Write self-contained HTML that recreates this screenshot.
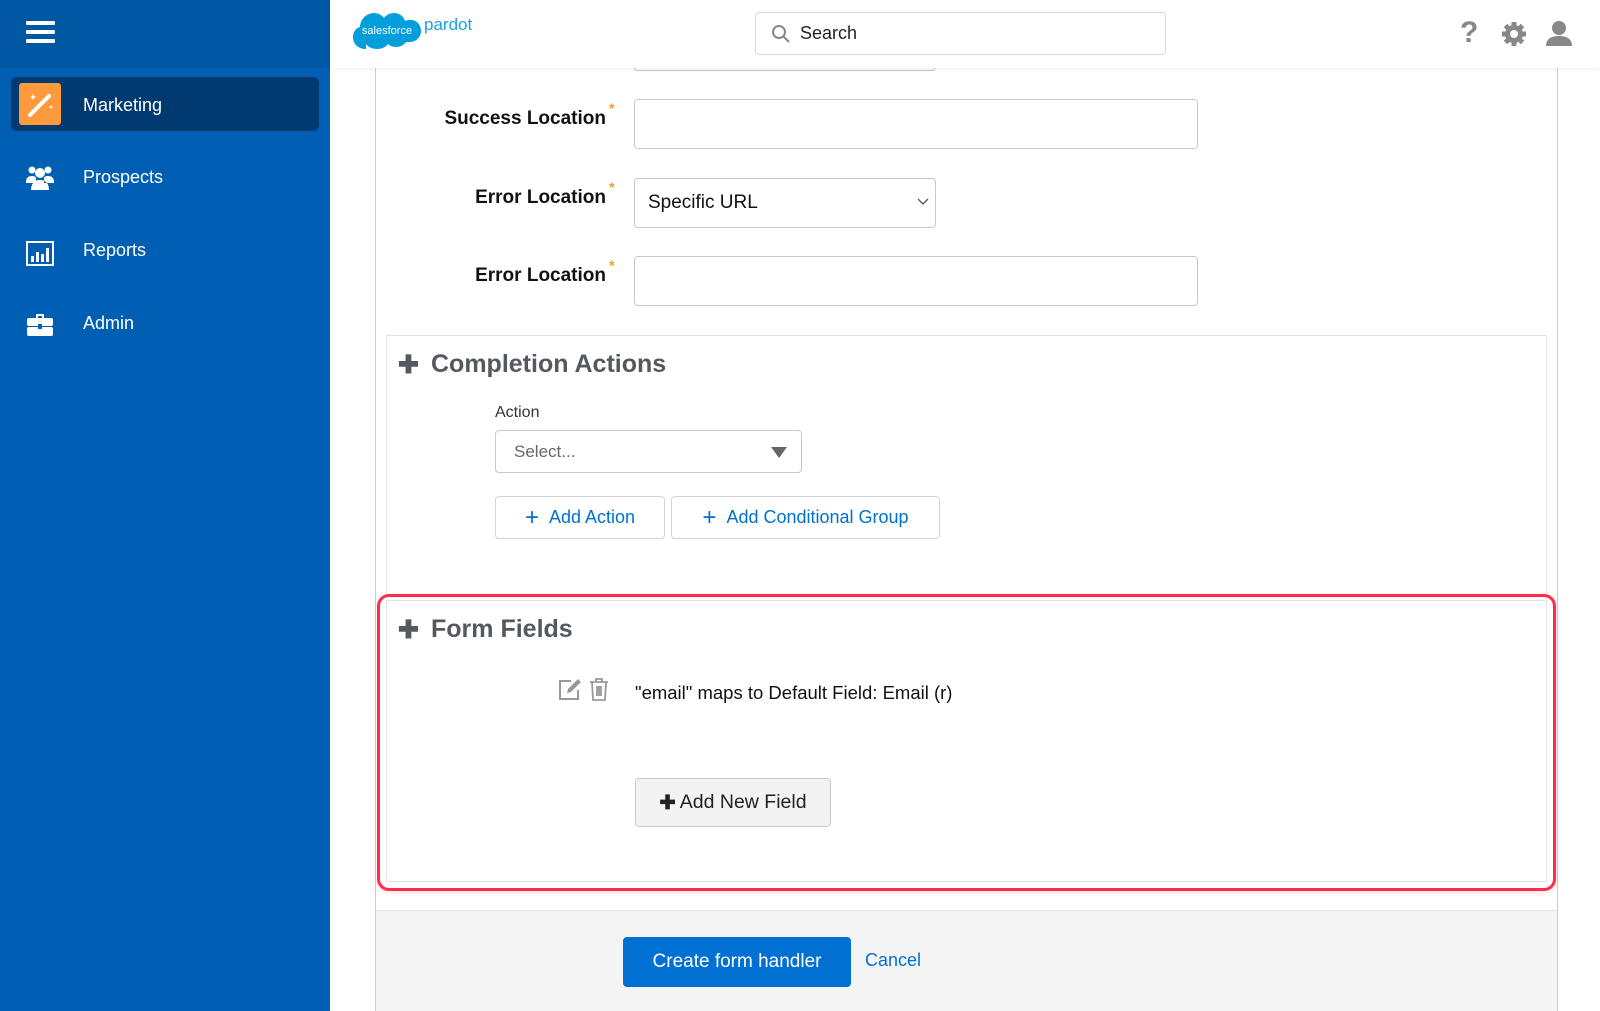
<!DOCTYPE html>
<html><head><meta charset="utf-8"><style>
*{box-sizing:border-box;margin:0;padding:0}
body{width:1600px;height:1011px;overflow:hidden;background:#fff;font-family:"Liberation Sans",sans-serif;position:relative;color:#16325c}
.abs{position:absolute}
.side{left:0;top:0;width:330px;height:1011px;background:#005fb2}
.sidetop{left:0;top:0;width:330px;height:68px;background:#0057a3}
.nav{left:83px;color:#fff;font-size:18px}
.hdr{left:330px;top:0;width:1270px;height:68px;background:#fff;box-shadow:0 2px 4px rgba(0,0,0,.06);z-index:5}
.lbl{font-weight:bold;font-size:19px;color:#111;text-align:right;width:300px;left:306px}
.lbl span{color:#ff9a1e;font-size:14px;top:-8px;margin-left:3px;position:absolute}
.inp{border:1px solid #c9c9c9;border-radius:4px;background:#fff}
.h2{font-size:25px;font-weight:bold;color:#54595f}
.btn{border:1px solid #d4d4d4;border-radius:4px;background:#fff;color:#0070d2;font-size:18px;display:flex;align-items:center;justify-content:center}
</style></head><body>
<div class="abs side"></div><div class="abs sidetop"></div>
<div class="abs" style="left:26px;top:21px;width:29px;height:4px;background:#fff;border-radius:1px;box-shadow:0 9px 0 #fff,0 18px 0 #fff"></div>
<div class="abs" style="left:11px;top:77px;width:308px;height:54px;background:#003a70;border-radius:6px"></div>
<div class="abs" style="left:19px;top:83px;width:42px;height:42px;background:#ff9a3c;border-radius:3px"></div>
<svg class="abs" style="left:19px;top:83px" width="42" height="42"><path d="M11 32 L30 13" stroke="#fff" stroke-width="4" stroke-linecap="round"/><path d="M14 11l1 2 2 1-2 1-1 2-1-2-2-1 2-1z M32 22l.7 1.3 1.3.7-1.3.7-.7 1.3-.7-1.3-1.3-.7 1.3-.7z" fill="#fff"/></svg>
<div class="abs nav" style="top:95px">Marketing</div>
<svg class="abs" style="left:26px;top:165px" width="28" height="28" fill="#fff"><circle cx="6" cy="5" r="3.5"/><circle cx="22" cy="5" r="3.5"/><circle cx="14" cy="8" r="5"/><path d="M0 17c0-4 2-6 6-6s4 2 4 2v5H0z M28 17c0-4-2-6-6-6s-4 2-4 2v5h10z M5 25c0-6 3-10 9-10s9 4 9 10z"/></svg>
<div class="abs nav" style="top:167px">Prospects</div>
<svg class="abs" style="left:26px;top:241px" width="28" height="25"><rect x="1" y="1" width="26" height="23" fill="none" stroke="#fff" stroke-width="2"/><rect x="5" y="15" width="3" height="6" fill="#fff"/><rect x="10" y="11" width="3" height="10" fill="#fff"/><rect x="15" y="13" width="3" height="8" fill="#fff"/><rect x="20" y="7" width="3" height="14" fill="#fff"/></svg>
<div class="abs nav" style="top:240px">Reports</div>
<svg class="abs" style="left:27px;top:314px" width="26" height="22" fill="#fff"><path d="M9 0h8v4h-2V2h-4v2H9z"/><rect x="0" y="4" width="26" height="8" rx="2"/><rect x="0" y="13" width="26" height="9" rx="2"/><rect x="11" y="10" width="4" height="5" fill="#005fb2"/></svg>
<div class="abs nav" style="top:313px">Admin</div>

<div class="abs hdr">
<svg class="abs" style="left:22px;top:5px" width="70" height="50"><path d="M14 44c-8 0-13-5-13-12 0-5 3-9 7-10 0-7 6-14 14-14 4 0 8 2 10 5 2-3 6-5 10-5 6 0 10 4 11 8 2-1 4-1 6-1 6 0 10 5 10 11s-5 11-11 11h-4c-2 3-6 5-10 5-3 0-6-1-8-3-2 3-6 5-11 5-5 0-9-2-11-5z" fill="#009edb"/><text x="35" y="29" font-size="11" fill="#fff" text-anchor="middle" font-family="Liberation Sans">salesforce</text></svg>
<div class="abs" style="left:94px;top:15px;font-size:17px;color:#1ba1e2">pardot</div>
<div class="abs inp" style="left:425px;top:12px;width:411px;height:43px;border-color:#d8d8d8"></div>
<svg class="abs" style="left:441px;top:24px" width="20" height="20"><circle cx="8" cy="8" r="6" fill="none" stroke="#888" stroke-width="2"/><path d="M12.5 12.5L18 18" stroke="#888" stroke-width="2"/></svg>
<div class="abs" style="left:470px;top:23px;font-size:18px;color:#222">Search</div>
<div class="abs" style="left:1130px;top:16px;font-size:30px;font-weight:bold;color:#888">?</div>
<svg class="abs" style="left:1171px;top:21px" width="26" height="26"><g fill="#888"><circle cx="13" cy="13" r="9"/><g stroke="#888" stroke-width="5"><path d="M13 1v24M1 13h24M4.5 4.5l17 17M21.5 4.5l-17 17"/></g></g><circle cx="13" cy="13" r="4" fill="#fff"/></svg>
<svg class="abs" style="left:1215px;top:20px" width="28" height="27" fill="#888"><circle cx="14" cy="8" r="7"/><path d="M1 26c0-7 5-10 13-10s13 3 13 10z"/></svg>
</div>
<div class="abs inp" style="left:634px;top:40px;width:302px;height:31px"></div>

<div class="abs" style="left:375px;top:68px;width:1183px;height:943px;border-left:1px solid #ccc;border-right:1px solid #ccc"></div>
<div class="abs lbl" style="top:108px">Success Location<span>*</span></div>
<div class="abs inp" style="left:634px;top:99px;width:564px;height:50px"></div>
<div class="abs lbl" style="top:187px">Error Location<span>*</span></div>
<div class="abs inp" style="left:634px;top:178px;width:302px;height:50px"></div>
<div class="abs" style="left:648px;top:192px;font-size:19px;color:#111">Specific URL</div>
<svg class="abs" style="left:917px;top:198px" width="12" height="8"><path d="M1 1l5 5 5-5" fill="none" stroke="#555" stroke-width="1.3"/></svg>
<div class="abs lbl" style="top:265px">Error Location<span>*</span></div>
<div class="abs inp" style="left:634px;top:256px;width:564px;height:50px"></div>

<div class="abs" style="left:386px;top:335px;width:1161px;height:270px;border:1px solid #e2e2e2;border-bottom:none"></div>
<div class="abs h2" style="left:398px;top:350px">✚</div>
<div class="abs h2" style="left:431px;top:350px">Completion Actions</div>
<div class="abs" style="left:495px;top:404px;font-size:16px;color:#333">Action</div>
<div class="abs inp" style="left:495px;top:430px;width:307px;height:43px"></div>
<div class="abs" style="left:514px;top:442px;font-size:17px;color:#666">Select...</div>
<svg class="abs" style="left:771px;top:447px" width="16" height="11"><path d="M0 0h16L8 11z" fill="#666"/></svg>
<div class="abs btn" style="left:495px;top:496px;width:170px;height:43px"><span style="font-size:24px;margin-right:10px;font-weight:300">+</span>Add Action</div>
<div class="abs btn" style="left:671px;top:496px;width:269px;height:43px"><span style="font-size:24px;margin-right:10px;font-weight:300">+</span>Add Conditional Group</div>

<div class="abs" style="left:386px;top:600px;width:1161px;height:282px;border:1px solid #e2e2e2;background:#fff"></div>
<div class="abs" style="left:377px;top:594px;width:1179px;height:297px;border:3px solid #ff2d4b;border-radius:12px;box-shadow:0 2px 6px rgba(255,45,75,.15)"></div>
<div class="abs h2" style="left:398px;top:615px">✚</div>
<div class="abs h2" style="left:431px;top:615px">Form Fields</div>
<svg class="abs" style="left:557px;top:678px" width="26" height="23"><path d="M14 3H3v18h18v-9" fill="none" stroke="#999" stroke-width="2"/><path d="M10 15l1-4 10-10 3 3-10 10z" fill="#999"/></svg>
<svg class="abs" style="left:589px;top:678px" width="20" height="23" fill="none" stroke="#999" stroke-width="1.8"><path d="M1 4h18M7 4V1h6v3M3 4l1 18h12l1-18M8 8v10M10 8v10M12 8v10"/></svg>
<div class="abs" style="left:635px;top:682px;font-size:18.5px;color:#111">"email" maps to Default Field: Email (r)</div>
<div class="abs" style="left:635px;top:778px;width:196px;height:49px;background:#f3f3f3;border:1px solid #c9c9c9;border-radius:4px;font-size:19.5px;color:#222;display:flex;align-items:center;justify-content:center"><b style="margin-right:4px">✚</b>Add New Field</div>

<div class="abs" style="left:376px;top:910px;width:1181px;height:101px;background:#f4f4f4;border-top:1px solid #e0e0e0"></div>
<div class="abs" style="left:623px;top:937px;width:228px;height:50px;background:#0070d2;border-radius:4px;color:#fff;font-size:19px;display:flex;align-items:center;justify-content:center">Create form handler</div>
<div class="abs" style="left:865px;top:950px;font-size:18px;color:#0070d2">Cancel</div>
</body></html>
